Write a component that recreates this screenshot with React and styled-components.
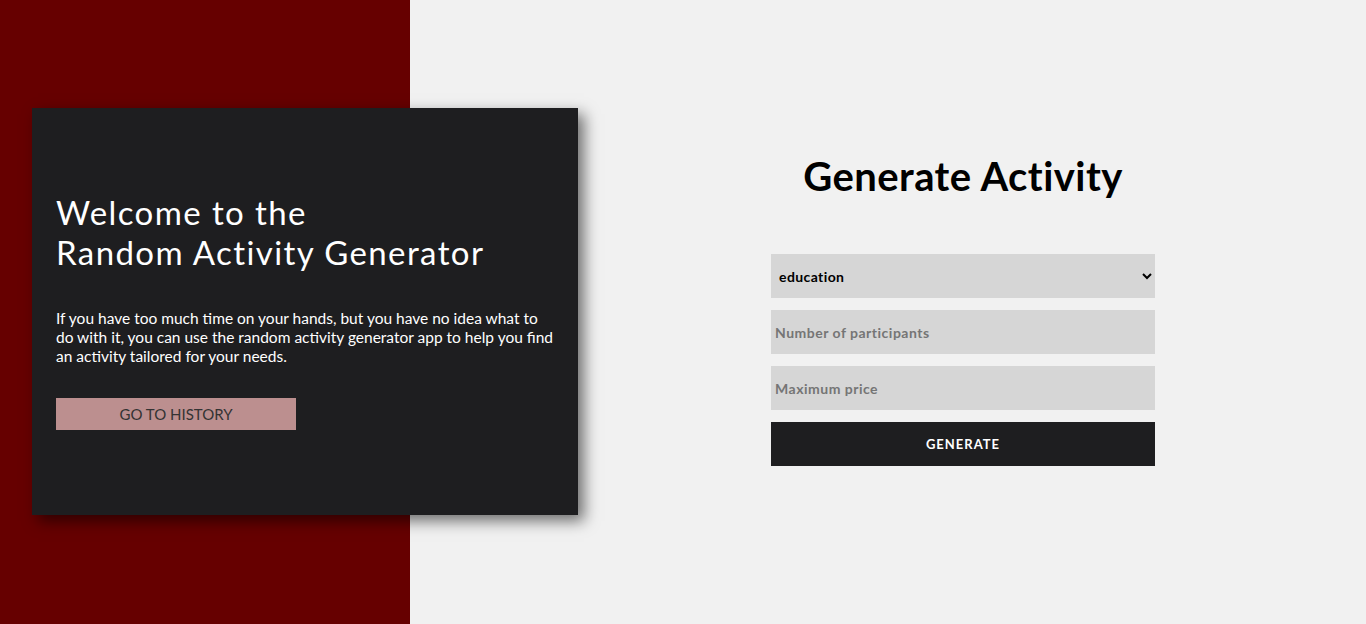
import React, { useState } from 'react'
import styled, { createGlobalStyle } from 'styled-components'

const GlobalStyle = createGlobalStyle`
  html, body {
    margin: 0;
    padding: 0;
    height: 100%;
  }
  body {
    font-family: "Lato", "Open Sans", sans-serif;
    background: #f1f1f1;
  }
`;

const Page = styled.div`
  display: flex;
  width: 100vw;
  height: 100vh;
  overflow: hidden;
`;

const SideBar = styled.div`
  width: 410px;
  flex-shrink: 0;
  background-color: #660000;
  display: flex;
  align-items: flex-start;
  padding-top: 108px;
  box-sizing: border-box;
`;

const Card = styled.div`
  position: relative;
  z-index: 1;
  flex-shrink: 0;
  width: 546px;
  height: 407px;
  margin-left: 32px;
  box-sizing: border-box;
  padding: 0 24px 1px;
  background-color: #1e1e20;
  box-shadow: 6px 6px 14px rgba(0, 0, 0, 0.55);
  display: flex;
  flex-direction: column;
  justify-content: center;
  color: white;
`;

const Welcome = styled.h1`
  margin: 0;
  font-size: 33px;
  font-weight: 400;
  line-height: 40px;
  letter-spacing: 1.4px;
`;

const Intro = styled.p`
  margin: 37px 0 32px;
  font-size: 15.5px;
  line-height: 19px;
  letter-spacing: 0;
`;

const HistoryButton = styled.button`
  width: 240px;
  height: 32px;
  border: none;
  padding: 0;
  background-color: #bc8f8f;
  color: #333;
  font-family: inherit;
  font-size: 15px;
  cursor: pointer;
`;

const Main = styled.div`
  flex: 1;
  padding-left: 150px;
  display: flex;
  flex-direction: column;
  align-items: center;
  padding-top: 151px;
`;

const Title = styled.h2`
  margin: 0 0 53px;
  font-size: 40px;
  font-weight: 700;
  line-height: 50px;
  letter-spacing: 0.45px;
  color: #000;
`;

const Form = styled.form`
  width: 384px;
  display: flex;
  flex-direction: column;
  gap: 12px;
`;

const Field = styled.input`
  height: 44px;
  box-sizing: border-box;
  border: none;
  outline: none;
  padding: 0 4px;
  background-color: #d6d6d6;
  font-family: inherit;
  font-size: 14px;
  font-weight: 700;
  letter-spacing: 0.5px;
  color: #000;
  &::placeholder {
    color: #757575;
  }
`;

const Select = styled.select`
  height: 44px;
  box-sizing: border-box;
  border: none;
  outline: none;
  padding: 0 4px;
  background-color: #d6d6d6;
  font-family: inherit;
  font-size: 14px;
  font-weight: 700;
  letter-spacing: 0.4px;
  color: #000;
`;

const GenerateButton = styled.button`
  height: 44px;
  border: none;
  background-color: #1e1e20;
  color: white;
  font-family: inherit;
  font-size: 13px;
  font-weight: 700;
  letter-spacing: 1px;
  cursor: pointer;
`;

const types = ['education', 'recreational', 'social', 'diy', 'charity', 'cooking', 'relaxation', 'music', 'busywork']

export default function App () {
  const [type, setType] = useState('education')

  return (
    <Page>
      <GlobalStyle />
      <SideBar>
        <Card>
          <Welcome>Welcome to the<br />Random Activity Generator</Welcome>
          <Intro>
            If you have too much time on your hands, but you have no idea what to do with it, you can use the random activity generator app to help you find an activity tailored for your needs.
          </Intro>
          <HistoryButton>GO TO HISTORY</HistoryButton>
        </Card>
      </SideBar>
      <Main>
        <Title>Generate Activity</Title>
        <Form onSubmit={(e) => e.preventDefault()}>
          <Select value={type} onChange={(e) => setType(e.target.value)}>
            {types.map((t) => <option key={t} value={t}>{t}</option>)}
          </Select>
          <Field type="number" placeholder="Number of participants" />
          <Field type="number" placeholder="Maximum price" />
          <GenerateButton type="submit">GENERATE</GenerateButton>
        </Form>
      </Main>
    </Page>
  )
}
